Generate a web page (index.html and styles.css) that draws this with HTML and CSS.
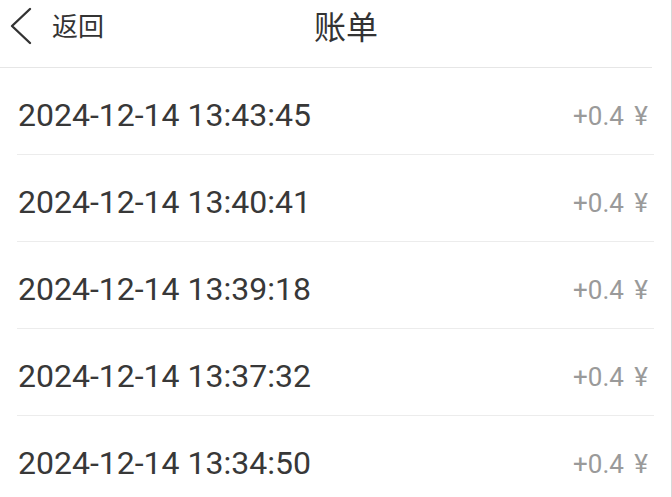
FILE: index.html
```html
<!DOCTYPE html>
<html lang="zh">
<head>
<meta charset="utf-8">
<link rel="stylesheet" href="styles.css">
</head>
<body>
<div class="page">
  <header class="nav">
    <div class="back">
      <svg class="chev" width="24" height="38" viewBox="0 0 24 38"><path d="M21 2 L3 19 L21 36" fill="none" stroke="#333" stroke-width="2.4" stroke-linecap="round" stroke-linejoin="round"/></svg>
      <span class="back-text">返回</span>
    </div>
    <h1 class="title">账单</h1>
  </header>
  <ul class="list">
    <li class="row"><span class="time">2024-12-14 13:43:45</span><span class="amt">+0.4 ¥</span></li>
    <li class="row"><span class="time">2024-12-14 13:40:41</span><span class="amt">+0.4 ¥</span></li>
    <li class="row"><span class="time">2024-12-14 13:39:18</span><span class="amt">+0.4 ¥</span></li>
    <li class="row"><span class="time">2024-12-14 13:37:32</span><span class="amt">+0.4 ¥</span></li>
    <li class="row"><span class="time">2024-12-14 13:34:50</span><span class="amt">+0.4 ¥</span></li>
  </ul>
</div>
</body>
</html>
```

FILE: styles.css
```css
html, body {
  margin: 0;
  padding: 0;
  background: #fff;
}
.page {
  width: 671px;
  height: 497px;
  overflow: hidden;
  border-right: 1px solid #d8d8d8;
  font-family: Roboto, "Noto Sans CJK SC", sans-serif;
  color: #333;
}
.nav {
  position: relative;
  height: 67px;
  width: 652px;
  border-bottom: 1px solid #e6e6e6;
  display: flex;
  align-items: center;
}
.back {
  display: flex;
  align-items: center;
  padding-left: 9px;
  margin-top: -16px;
}
.chev {
  display: block;
}
.back-text {
  font-family: "Noto Sans CJK SC", sans-serif;
  font-size: 26px;
  margin-left: 19px;
  margin-top: -2px;
  color: #333;
}
.title {
  position: absolute;
  left: 314px;
  top: 3px;
  margin: 0;
  font-family: "Noto Sans CJK SC", sans-serif;
  font-weight: 400;
  font-size: 32px;
  line-height: 44px;
  color: #333;
}
.list {
  list-style: none;
  margin: 0;
  padding: 0 17px 0 17px;
}
.row {
  height: 86px;
  border-bottom: 1px solid #ececec;
  display: flex;
  align-items: center;
  justify-content: space-between;
}
.time {
  font-size: 32px;
  color: #383838;
  padding-left: 1px;
  margin-top: 8px;
}
.amt {
  font-size: 26px;
  color: #9a9a9a;
  padding-right: 6px;
  margin-top: 10px;
  word-spacing: 4px;
}
```
